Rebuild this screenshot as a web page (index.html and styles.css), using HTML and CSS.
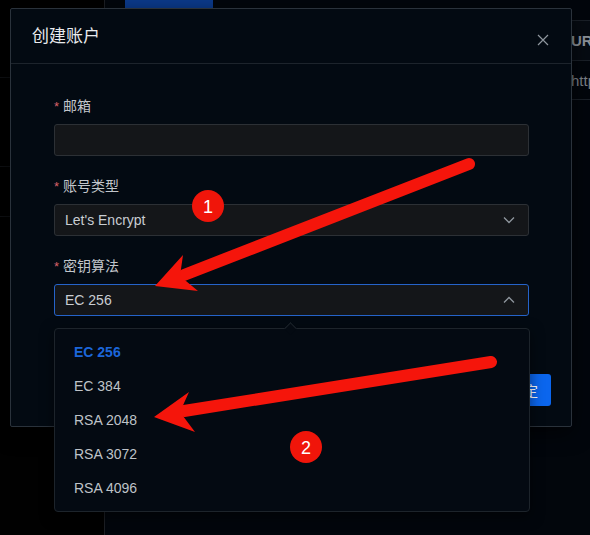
FILE: index.html
```html
<!DOCTYPE html>
<html lang="zh-CN">
<head>
<meta charset="utf-8">
<title>创建账户</title>
<link rel="stylesheet" href="styles.css">
</head>
<body>
<div class="app">
  <aside class="sidebar">
    <div class="side-item side-item-a"></div>
    <div class="side-item side-item-b"></div>
    <div class="side-item side-item-c"></div>
  </aside>
  <main class="main">
    <div class="toolbar"><span class="tab-active"></span></div>
    <div class="table">
      <div class="trow thead"><div class="cell"></div><div class="cell cell-url">URL</div></div>
      <div class="trow"><div class="cell"></div><div class="cell cell-url light">https://</div></div>
    </div>
  </main>
</div>

<div class="modal">
  <div class="modal-header">
    <span class="modal-title">创建账户</span>
    <svg class="close" width="12" height="12" viewBox="0 0 12 12"><path d="M1 1L11 11M11 1L1 11" stroke="#8f969e" stroke-width="1.2" fill="none"/></svg>
  </div>
  <div class="modal-body">
    <div class="field">
      <div class="label"><span class="req">*</span>邮箱</div>
      <div class="input"></div>
    </div>
    <div class="field">
      <div class="label"><span class="req">*</span>账号类型</div>
      <div class="input select"><span>Let's Encrypt</span>
        <svg class="chev" width="12" height="8" viewBox="0 0 12 8"><path d="M1 1.5L6 6.5L11 1.5" stroke="#8f969e" stroke-width="1.3" fill="none"/></svg>
      </div>
    </div>
    <div class="field">
      <div class="label"><span class="req">*</span>密钥算法</div>
      <div class="input select focus"><span>EC 256</span>
        <svg class="chev" width="12" height="8" viewBox="0 0 12 8"><path d="M1 6.5L6 1.5L11 6.5" stroke="#8f969e" stroke-width="1.3" fill="none"/></svg>
      </div>
    </div>
  </div>
  <div class="modal-footer">
    <button class="btn-primary">确定</button>
  </div>
</div>

<div class="dropdown">
  <span class="caret"></span>
  <div class="opt selected">EC 256</div>
  <div class="opt">EC 384</div>
  <div class="opt">RSA 2048</div>
  <div class="opt">RSA 3072</div>
  <div class="opt">RSA 4096</div>
</div>

<svg class="annot" width="590" height="535" viewBox="0 0 590 535">
  <line x1="469" y1="164" x2="184" y2="275" stroke="#f5150b" stroke-width="12" stroke-linecap="round"/>
  <polygon points="155,286 183,255 180,276 198,291" fill="#f5150b"/>
  <line x1="491" y1="362" x2="184" y2="411" stroke="#f5150b" stroke-width="12" stroke-linecap="round"/>
  <polygon points="154,417 189,392 180,412 195,432" fill="#f5150b"/>
  <circle cx="208" cy="206" r="16" fill="#f0150a"/>
  <text x="208" y="212.5" class="badge-num">1</text>
  <circle cx="306" cy="447" r="16" fill="#f0150a"/>
  <text x="306" y="453.5" class="badge-num">2</text>
</svg>
</body>
</html>
```
FILE: styles.css
```css
* { box-sizing: border-box; }
html, body { margin: 0; padding: 0; }
body {
  width: 590px;
  height: 535px;
  overflow: hidden;
  background: #000;
  position: relative;
  font-family: "Liberation Sans", "Noto Sans CJK SC", sans-serif;
  font-size: 14px;
  color: #c5c9ce;
}
.app { display: flex; height: 535px; }
.sidebar {
  width: 105px;
  flex-shrink: 0;
  background: #010101;
  border-right: 1px solid #1c1f24;
  display: flex;
  flex-direction: column;
}
.side-item { border-bottom: 1px solid #0e1013; }
.side-item-a { height: 78px; }
.side-item-b { height: 89px; }
.side-item-c { height: 50px; }
.main {
  flex: 1;
  min-width: 0;
  overflow: hidden;
  background: #02060c;
  display: flex;
  flex-direction: column;
}
.toolbar { height: 20px; padding-left: 20px; }
.tab-active { display: block; width: 88px; height: 8px; background: #0b3a8c; }
.table { display: flex; flex-direction: column; }
.trow {
  display: grid;
  grid-template-columns: 466px 200px;
  height: 40px;
  border-top: 1px solid #1a2028;
  align-items: center;
}
.trow:last-child { border-bottom: 1px solid #1a2028; }
.thead { background: #060b12; }
.cell-url { font-weight: bold; color: #8e949b; font-size: 15px; white-space: nowrap; }
.cell-url.light { font-weight: normal; color: #7d838a; }

.modal {
  position: absolute;
  left: 10px;
  top: 8px;
  width: 562px;
  height: 419px;
  background: #030a12;
  border: 1px solid #2a323b;
  border-radius: 2px;
  display: flex;
  flex-direction: column;
  box-shadow: 0 6px 20px rgba(0,0,0,0.6);
}
.modal-header {
  height: 55px;
  border-bottom: 1px solid #1d242c;
  display: flex;
  align-items: center;
  justify-content: space-between;
  padding: 0 22px 0 21px;
}
.modal-title { font-size: 17px; color: #e9ebee; margin-top: -4px; }
.close { display: block; margin-top: 7px; }
.modal-body { padding: 32px 42px 0 43px; display: flex; flex-direction: column; gap: 20px; }
.field { display: flex; flex-direction: column; gap: 8px; }
.label { height: 20px; line-height: 20px; font-size: 14px; color: #c2c6cb; }
.req { color: #d9606a; margin-right: 4px; font-size: 13px; }
.input {
  height: 32px;
  background: #141619;
  border: 1px solid #2c3035;
  border-radius: 3px;
}
.select {
  display: flex;
  align-items: center;
  justify-content: space-between;
  padding: 0 13px 0 10px;
  color: #c9cdd2;
  font-size: 14px;
}
.select.focus { border-color: #2563c9; }
.chev { display: block; }
.modal-footer {
  margin-top: auto;
  padding: 0 20px 20px 0;
  display: flex;
  justify-content: flex-end;
}
.btn-primary {
  height: 32px;
  padding: 0 13px;
  background: #0b66ee;
  border: none;
  border-radius: 3px;
  color: #fff;
  font-family: "Liberation Sans", "Noto Sans CJK SC", sans-serif;
  font-size: 14px;
}

.dropdown {
  position: absolute;
  left: 54px;
  top: 328px;
  width: 476px;
  height: 184px;
  background: #040a12;
  border: 1px solid #1d242b;
  border-radius: 4px;
  padding: 6px 0;
  box-shadow: 0 4px 14px rgba(0,0,0,0.5);
}
.caret {
  position: absolute;
  left: 231px;
  top: -5px;
  width: 9px;
  height: 9px;
  background: #040a12;
  border-left: 1px solid #1d242b;
  border-top: 1px solid #1d242b;
  transform: rotate(45deg);
}
.opt {
  height: 34px;
  line-height: 34px;
  padding-left: 19px;
  color: #bfc3c8;
  font-size: 14px;
}
.opt.selected { color: #1c66d9; font-weight: bold; }

.annot { position: absolute; left: 0; top: 0; pointer-events: none; }
.badge-num {
  fill: #fff;
  font-family: "Liberation Sans", sans-serif;
  font-size: 18px;
  text-anchor: middle;
}
```
